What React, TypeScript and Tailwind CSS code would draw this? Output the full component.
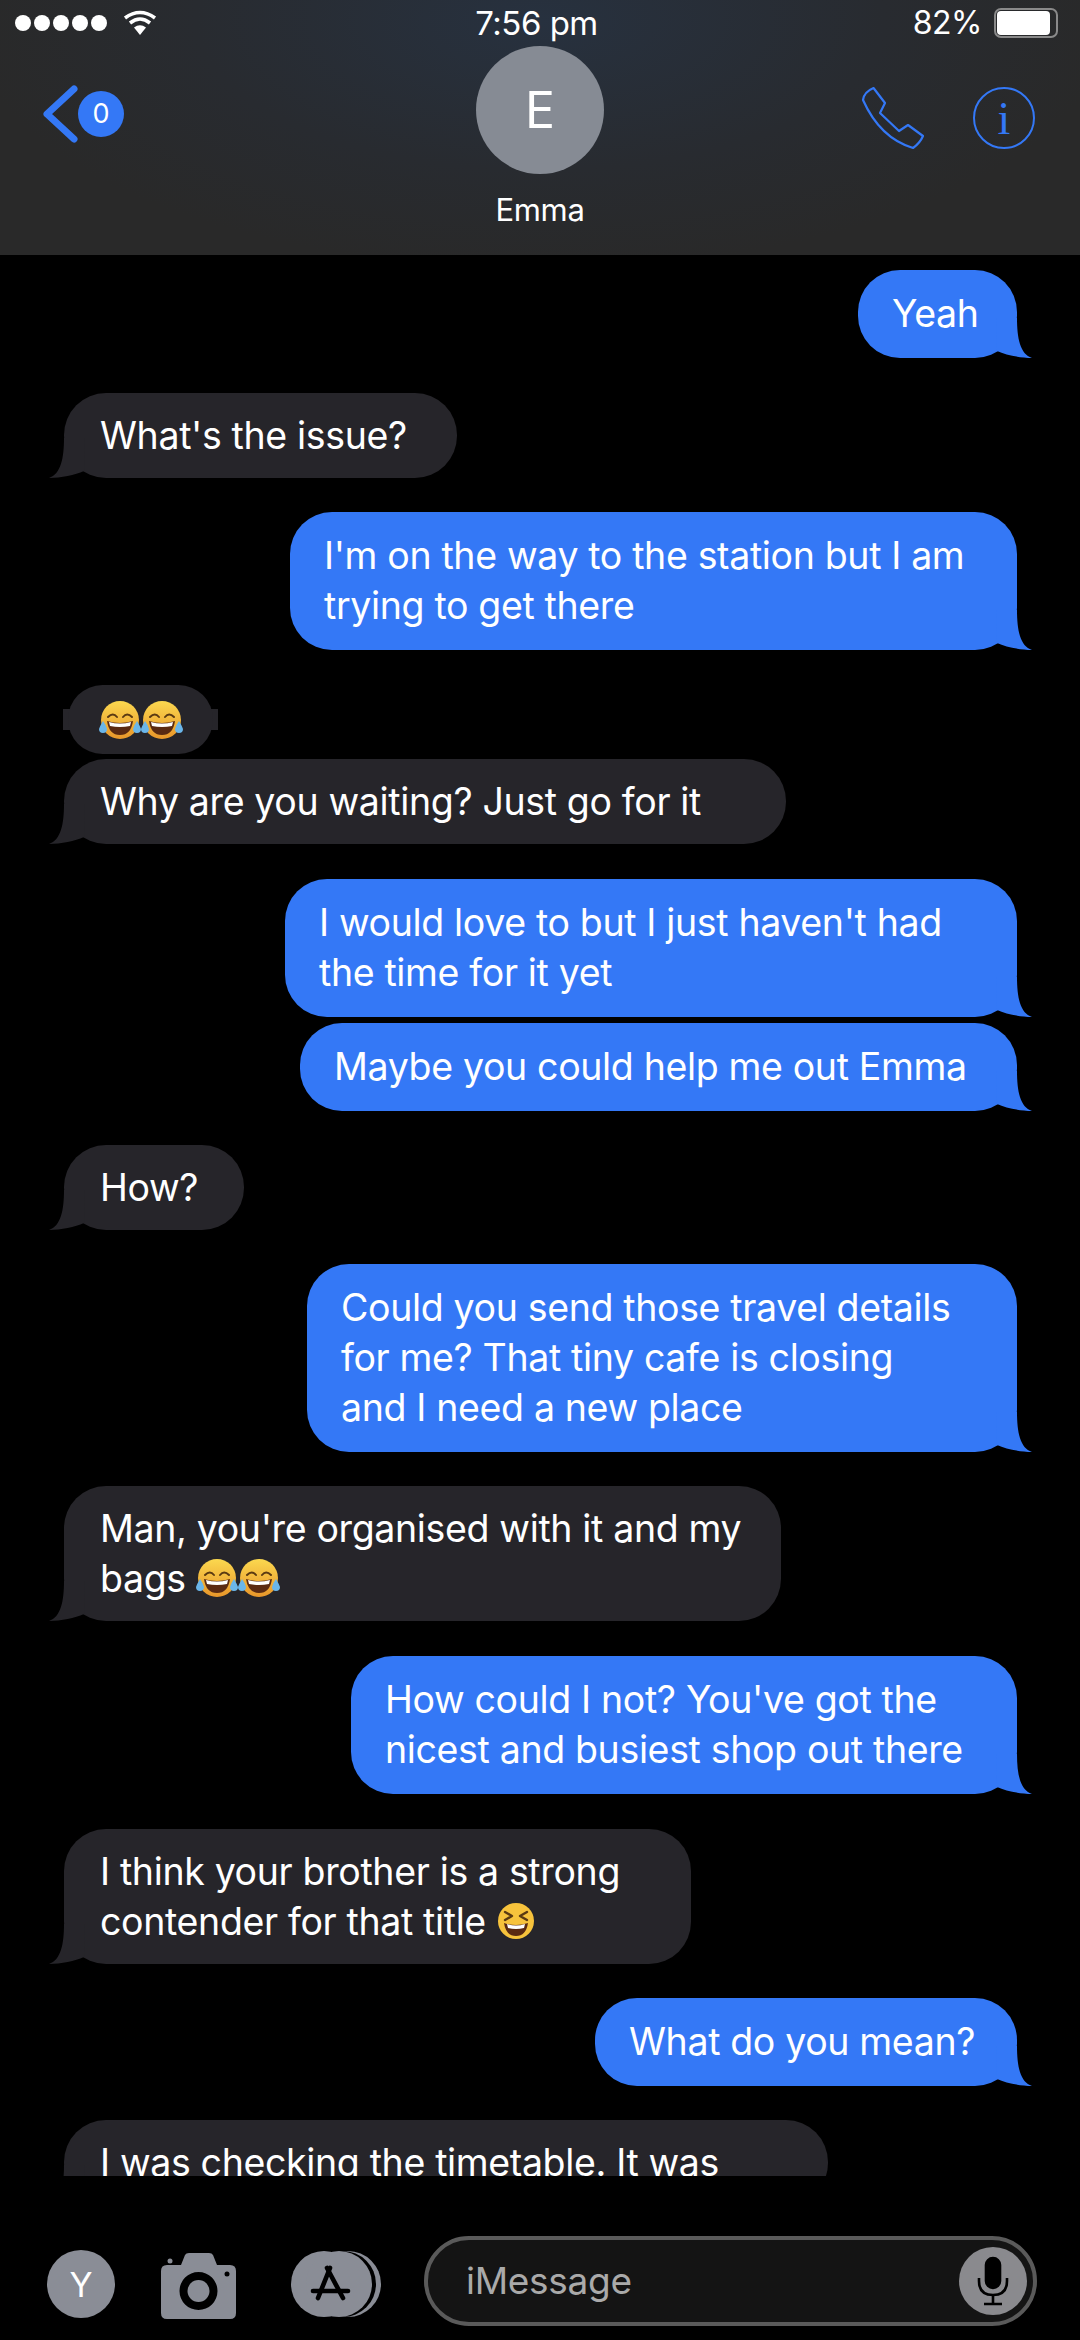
import React from 'react';

type Msg = {
    id: number;
    mine: boolean;
    lines: React.ReactNode[];
    box: string;
};

// small emoji drawings, there is no colour emoji font in the sandbox
const LaughCry = () => (
    <svg width="42" height="40" viewBox="0 0 42 40" className="inline-block align-[-6px]">
        <defs>
            <linearGradient id="face" x1="0" y1="0" x2="0" y2="1">
                <stop offset="0" stopColor="#fbd84f" />
                <stop offset="1" stopColor="#e8962a" />
            </linearGradient>
        </defs>
        <circle cx="21" cy="20" r="19" fill="url(#face)" />
        <path d="M9 17 q5 -5 9 0 M24 17 q4 -5 9 0" fill="none" stroke="#5a3a12" strokeWidth="2" strokeLinecap="round" />
        <path d="M8 21 Q21 25 34 21 Q32 35 21 35 Q10 35 8 21 Z" fill="#5a2a12" />
        <path d="M10 22 Q21 25 32 22 L31 26 Q21 28 11 26 Z" fill="#fff" />
        <path d="M4 21 Q1 26 0 29 Q0 33 4 33 Q8 33 8 29 Q7 25 4 21 Z M38 21 Q41 26 42 29 Q42 33 38 33 Q34 33 34 29 Q35 25 38 21 Z" fill="#6ab6ea" />
    </svg>
);

const Squint = () => (
    <svg width="40" height="40" viewBox="0 0 40 40" className="inline-block align-[-6px]">
        <circle cx="20" cy="20" r="18" fill="#f7c33c" />
        <path d="M9 11 L16 15 L9 19 M31 11 L24 15 L31 19" fill="none" stroke="#5a3a12" strokeWidth="2.4" strokeLinecap="round" strokeLinejoin="round" />
        <path d="M8 22 Q20 26 32 22 Q30 35 20 35 Q10 35 8 22 Z" fill="#5a2a12" />
        <path d="M11 23 Q20 26 29 23 L28 27 Q20 29 12 27 Z" fill="#fff" />
    </svg>
);

const messages: Msg[] = [
    { id: 1, mine: true, lines: ['Yeah'], box: 'w-[159px] mt-[15px]' },
    { id: 2, mine: false, lines: ["What's the issue?"], box: 'w-[393px] mt-[35px]' },
    { id: 3, mine: true, lines: ["I'm on the way to the station but I am", 'trying to get there'], box: 'w-[727px] mt-[34px]' },
    { id: 4, mine: false, lines: ['Why are you waiting? Just go for it'], box: 'w-[722px] mt-[109px]' },
    { id: 5, mine: true, lines: ["I would love to but I just haven't had", 'the time for it yet'], box: 'w-[732px] mt-[35px]' },
    { id: 6, mine: true, lines: ['Maybe you could help me out Emma'], box: 'w-[717px] mt-[6px]' },
    { id: 7, mine: false, lines: ['How?'], box: 'w-[180px] mt-[34px]' },
    { id: 8, mine: true, lines: ['Could you send those travel details', 'for me? That tiny cafe is closing', 'and I need a new place'], box: 'w-[710px] mt-[34px]' },
    { id: 9, mine: false, lines: ["Man, you're organised with it and my", <span key="l">bags <LaughCry /><LaughCry /></span>], box: 'w-[717px] mt-[34px]' },
    { id: 10, mine: true, lines: ["How could I not? You've got the", 'nicest and busiest shop out there'], box: 'w-[666px] mt-[35px]' },
    { id: 11, mine: false, lines: ['I think your brother is a strong', <span key="l">contender for that title <Squint /></span>], box: 'w-[627px] mt-[35px]' },
    { id: 12, mine: true, lines: ['What do you mean?'], box: 'w-[422px] mt-[34px]' },
    { id: 13, mine: false, lines: ['I was checking the timetable. It was'], box: 'w-[764px] mt-[34px]' },
];

const Bubble = ({ msg }: { msg: Msg }) => (
    <div
        className={`relative shrink-0 rounded-[42px] ${msg.box} ${
            msg.mine
                ? 'self-end mr-[63px] bg-[#3478f6] pl-[34px] py-[19px]'
                : 'self-start ml-[64px] bg-[#26252a] pl-[36px] py-[17.5px]'
        }`}
    >
        {msg.lines.map((line, i) => (
            <div key={i} className="h-[50px] leading-[50px] whitespace-nowrap">{line}</div>
        ))}
        {msg.mine ? (
            <svg width="36" height="40" viewBox="0 0 36 40" className="absolute right-[-15px] bottom-0">
                <path d="M21 0 C21 20 24 36 36 40 C24 40 10 37 1 33 L0 0 Z" fill="#3478f6" />
            </svg>
        ) : (
            <svg width="36" height="40" viewBox="0 0 36 40" className="absolute left-[-15px] bottom-0 -scale-x-100">
                <path d="M21 0 C21 20 24 36 36 40 C24 40 10 37 1 33 L0 0 Z" fill="#26252a" />
            </svg>
        )}
    </div>
);

const Wifi = () => (
    <svg width="34" height="26" viewBox="0 0 34 26" fill="none" stroke="#fff" strokeWidth="3.6">
        <path d="M2 8 Q17 -3 32 8" />
        <path d="M7 13 Q17 5 27 13" />
        <path d="M17 25 L11 17.5 Q17 13 23 17.5 Z" fill="#fff" stroke="none" />
    </svg>
);

const PhoneIcon = () => (
    <svg width="66" height="68" viewBox="20 14 66 68" fill="none" stroke="#3478f6" strokeWidth="2.2" strokeLinejoin="round">
        <path d="M33.5 18 L45 33 L40 43 L59 61 L68 55 L83 66 Q80 73 73 78 Q40 68 23 30 Q24 22 33.5 18 Z" />
    </svg>
);

const Camera = () => (
    <svg width="75" height="66" viewBox="0 0 75 66">
        <path
            fillRule="evenodd"
            fill="#8a8d96"
            d="M6 12 H20 L24 2 Q25 0 28 0 H48 Q51 0 52 2 L56 12 H69 Q75 12 75 18 V60 Q75 66 69 66 H6 Q0 66 0 60 V18 Q0 12 6 12 Z M37.5 19 A19 19 0 1 0 37.5 57 A19 19 0 1 0 37.5 19 Z"
        />
        <circle cx="37.5" cy="38" r="11" fill="#8a8d96" />
        <circle cx="66" cy="21" r="2.5" fill="#000" />
        <circle cx="9" cy="8" r="2.5" fill="#8a8d96" />
    </svg>
);

const AppStore = () => (
    <svg width="90" height="66" viewBox="0 0 90 66">
        <circle cx="57" cy="33" r="33" fill="#8a8d96" />
        <circle cx="52" cy="33" r="33" fill="#000" />
        <circle cx="33" cy="33" r="33" fill="#8a8d96" />
        <circle cx="48" cy="33" r="33" fill="#8a8d96" />
        <g fill="none" stroke="#000" strokeWidth="4.6" strokeLinecap="round">
            <path d="M39 17 L27 47" />
            <path d="M36 17 L52 47" />
            <path d="M22 40 H57" />
        </g>
    </svg>
);

const Mic = () => (
    <svg width="34" height="50" viewBox="0 0 34 50" fill="none" stroke="#000" strokeWidth="2.6">
        <rect x="10" y="2" width="14" height="30" rx="7" fill="#000" />
        <path d="M3 22 V25 Q3 39 17 39 Q31 39 31 25 V22" />
        <path d="M17 39 V47 M8 48 H26" />
    </svg>
);

export default function App() {
    return (
        <div className="w-[1080px] h-[2340px] overflow-hidden flex flex-col bg-black text-white font-['Inter','Liberation_Sans',sans-serif]">
            {/* Header */}
            <div className="relative h-[255px] shrink-0 bg-[radial-gradient(ellipse_at_50%_8%,#27313f_0%,#282b30_45%,#292929_75%)]">
                <div className="h-[46px] pl-[15px] pr-[22px] flex items-center justify-between">
                    <div className="flex items-center gap-[16px] w-[300px]">
                        <div className="flex gap-[3px]">
                            {[0, 1, 2, 3, 4].map((d) => (
                                <div key={d} className="w-[16px] h-[16px] rounded-full bg-white" />
                            ))}
                        </div>
                        <Wifi />
                    </div>
                    <div className="text-[33px] leading-[46px] tracking-[-0.5px]">7:56 pm</div>
                    <div className="flex items-center justify-end gap-[12px] w-[300px]">
                        <span className="text-[32px] leading-[46px] tracking-[-0.5px]">82%</span>
                        <div className="w-[64px] h-[30px] rounded-[7px] border-2 border-[#8a8a8a] p-[1px] pr-[6px]">
                            <div className="w-full h-full bg-white rounded-[4px]" />
                        </div>
                    </div>
                </div>
                <div className="flex flex-col items-center">
                    <div className="w-[128px] h-[128px] rounded-full bg-[#868b94] flex items-center justify-center text-[50px]">E</div>
                    <div className="mt-[15px] text-[31px] leading-[42px] tracking-[-0.3px]">Emma</div>
                </div>
                <div className="absolute left-[42px] top-[85px] flex items-center">
                    <svg width="36" height="58" viewBox="0 0 36 58" fill="none" stroke="#3478f6" strokeWidth="7" strokeLinecap="round" strokeLinejoin="round">
                        <path d="M32 4 L5 29 L32 54" />
                    </svg>
                    <div className="w-[46px] h-[46px] rounded-full bg-[#3478f6] flex items-center justify-center text-[27px]">0</div>
                </div>
                <div className="absolute left-[860px] top-[84px]">
                    <PhoneIcon />
                </div>
                <div className="absolute left-[973px] top-[87px] w-[62px] h-[62px] rounded-full border-2 border-[#3478f6] flex items-center justify-center text-[#3478f6] text-[46px] font-['Liberation_Serif',serif]">i</div>
            </div>

            {/* Messages */}
            <div className="h-[1921px] shrink-0 overflow-hidden flex flex-col text-[37.5px] tracking-[-0.35px] relative">
                {messages.map((msg) => (
                    <Bubble key={msg.id} msg={msg} />
                ))}
                {/* emoji-only bubble with its two side nubs */}
                <div className="absolute left-[63px] top-[454px] w-[155px] h-[21px] bg-[#26252a]" />
                <div className="absolute left-[68px] top-[430px] w-[145px] h-[69px] rounded-[35px] bg-[#26252a] flex items-center justify-center">
                    <LaughCry /><LaughCry />
                </div>
            </div>

            {/* Input bar */}
            <div className="flex-1 flex items-start pl-[47px] pr-[43px] pt-[60px]">
                <div className="mt-[14px] w-[68px] h-[68px] rounded-full bg-[#8a8d96] flex items-center justify-center text-[34px]">Y</div>
                <div className="mt-[17px] ml-[46px]"><Camera /></div>
                <div className="mt-[15px] ml-[55px]"><AppStore /></div>
                <div className="ml-[43px] w-[613px] h-[90px] rounded-full border-4 border-[#5a5a5a] bg-[#141414] flex items-center justify-between pl-[38px] pr-[6px]">
                    <span className="text-[37px] text-[#aaaaaa] tracking-[-0.3px]">iMessage</span>
                    <div className="w-[68px] h-[68px] rounded-full bg-[#8a8a8e] flex items-center justify-center"><Mic /></div>
                </div>
            </div>
        </div>
    );
}
